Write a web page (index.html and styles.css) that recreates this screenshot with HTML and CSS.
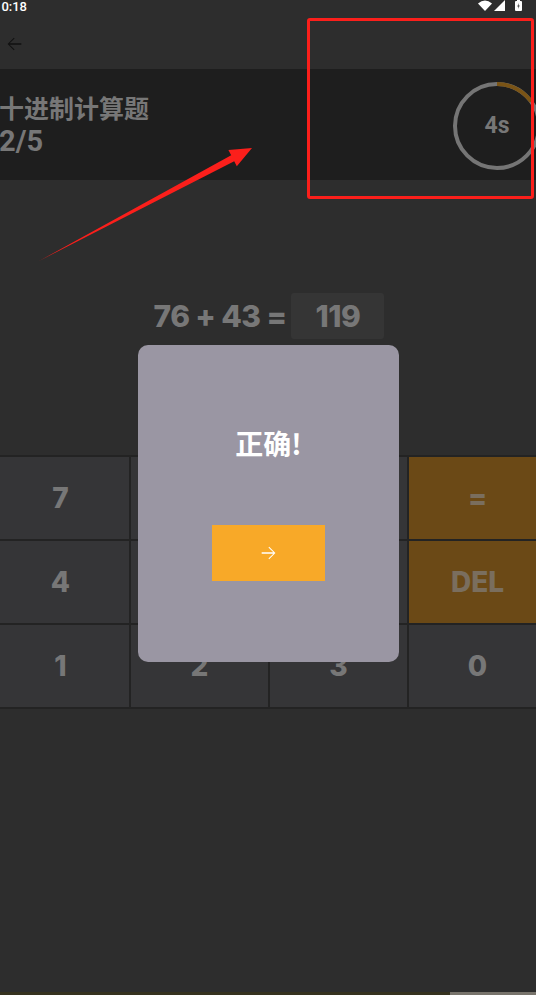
FILE: index.html
```html
<!DOCTYPE html>
<html lang="zh">
<head>
    <meta charset="UTF-8">
    <meta name="viewport" content="width=device-width, initial-scale=1.0">
    <title>十进制计算题</title>
    <link rel="stylesheet" href="styles.css">
</head>
<body>
    <div class="screen">
        <!-- Status bar -->
        <div class="status-bar">
            <span class="clock">10:18</span>
            <div class="status-icons">
                <svg class="wifi" viewBox="0 0 14 11" width="14" height="11"><path d="M0 3.5 Q7 -2.5 14 3.5 L7 11 Z" fill="#fff"/></svg>
                <svg class="signal" viewBox="0 0 11 11" width="11" height="11"><path d="M11 0 V11 H0 Z" fill="#fff"/></svg>
                <svg class="battery" viewBox="0 0 7 11" width="7" height="11"><rect x="0" y="1" width="7" height="10" rx="1" fill="#fff"/><rect x="2" y="0" width="3" height="1" fill="#fff"/><path d="M3.8 3 L2.3 6.4 H3.5 L3.1 9 L4.7 5.5 H3.5 Z" fill="#2d2d2d"/></svg>
            </div>
        </div>

        <!-- Toolbar -->
        <div class="toolbar">
            <svg class="back" viewBox="0 0 24 24" width="22" height="22"><path d="M20 11.25H7.3l5.3-5.3L11.8 5.1 5 12l6.8 6.9.8-.85-5.3-5.3H20v-1.5z" fill="#111"/></svg>
        </div>

        <!-- Quiz header -->
        <div class="quiz-header">
            <div class="quiz-info">
                <div class="quiz-title">十进制计算题</div>
                <div class="quiz-count">2/5</div>
            </div>
            <div class="countdown">
                <svg viewBox="0 0 92 92" width="92" height="92">
                    <circle cx="46" cy="46" r="42" fill="none" stroke="#757575" stroke-width="4"/>
                    <circle cx="46" cy="46" r="42" fill="none" stroke="#7a5416" stroke-width="4"
                        stroke-dasharray="40 300" transform="rotate(-90 46 46)"/>
                </svg>
                <span class="countdown-text">4s</span>
            </div>
        </div>

        <!-- Question -->
        <div class="question">
            <span class="expr">76 + 43 =</span>
            <span class="answer">119</span>
        </div>

        <!-- Keypad -->
        <div class="keypad">
            <div class="key">7</div>
            <div class="key">8</div>
            <div class="key">9</div>
            <div class="key key-op">=</div>
            <div class="key">4</div>
            <div class="key">5</div>
            <div class="key">6</div>
            <div class="key key-op">DEL</div>
            <div class="key">1</div>
            <div class="key">2</div>
            <div class="key">3</div>
            <div class="key">0</div>
        </div>

        <!-- Result dialog -->
        <div class="dialog">
            <div class="dialog-title">正确!</div>
            <button class="next-btn">
                <svg viewBox="0 0 24 24" width="22" height="22"><path d="M12.2 5.1l-.8.85 5.3 5.3H4v1.5h12.7l-5.3 5.3.8.85L19 12z" fill="#fff"/></svg>
            </button>
        </div>

        <!-- Annotation -->
        <div class="mark-box"></div>
        <svg class="mark-arrow" viewBox="0 0 554 300" width="554" height="300">
            <polygon points="47,261 239.2,155.2 236.4,149.9 260,148 244.8,166.2 242.2,161.2" fill="#fb1f1b"/>
        </svg>

        <div class="nav-bar"><div class="nav-thumb"></div></div>
    </div>
</body>
</html>
```

FILE: styles.css
```css
/* General reset */
* {
    margin: 0;
    padding: 0;
    box-sizing: border-box;
}

body {
    background-color: #2d2d2d;
    overflow: hidden;
    font-family: Roboto, "Noto Sans CJK SC", sans-serif;
}

/* The phone screen is a little wider than the shot, so shift it left */
.screen {
    position: relative;
    width: 554px;
    height: 995px;
    margin-left: -8px;
    background-color: #2d2d2d;
    display: flex;
    flex-direction: column;
}

/* Status bar */
.status-bar {
    height: 18px;
    display: flex;
    justify-content: space-between;
    align-items: flex-start;
    padding: 0 24px 0 2px;
    color: #fff;
}

.clock {
    font-size: 13px;
    font-weight: 500;
    line-height: 13px;
}

.status-icons {
    display: flex;
    gap: 2px;
}

.battery {
    margin-left: 8px;
}

/* Toolbar */
.toolbar {
    height: 51px;
    display: flex;
    align-items: center;
    padding-left: 11px;
}

/* Quiz header */
.quiz-header {
    height: 111px;
    background-color: #1e1e1e;
    display: flex;
    justify-content: space-between;
    align-items: center;
    padding: 0 3px 0 7px;
    color: #777;
}

.quiz-title {
    font-family: "Noto Sans CJK SC", sans-serif;
    font-weight: bold;
    font-size: 25px;
    line-height: 33px;
}

.quiz-count {
    font-weight: bold;
    font-size: 29px;
    line-height: 34px;
}

.countdown {
    position: relative;
    width: 92px;
    height: 92px;
    margin-top: 2px;
}

.countdown svg {
    display: block;
}

.countdown-text {
    position: absolute;
    inset: 0;
    display: flex;
    justify-content: center;
    align-items: center;
    font-weight: bold;
    font-size: 23px;
    color: #777;
}

/* Question */
.question {
    margin-top: 113px;
    height: 46px;
    display: flex;
    justify-content: center;
    align-items: center;
    gap: 5px;
    font-family: Inter, sans-serif;
    font-weight: 800;
    color: #777;
}

.expr {
    font-size: 30px;
    letter-spacing: -0.6px;
}

.answer {
    width: 93px;
    height: 46px;
    background-color: #353535;
    border-radius: 3px;
    display: flex;
    justify-content: center;
    align-items: center;
    font-size: 30px;
    letter-spacing: -0.6px;
}

/* Keypad */
.keypad {
    margin-top: 116px;
    display: grid;
    grid-template-columns: repeat(4, 1fr);
    grid-template-rows: repeat(3, 82px);
    gap: 2px;
    padding: 2px 0;
    background-color: #232323;
}

.key {
    background-color: #353537;
    display: flex;
    justify-content: center;
    align-items: center;
    font-family: Inter, sans-serif;
    font-weight: 800;
    font-size: 28px;
    color: #777;
}

.key-op {
    background-color: #6b4916;
    color: #7a6e5e;
}

/* Result dialog */
.dialog {
    position: absolute;
    left: 146px;
    top: 345px;
    width: 261px;
    height: 317px;
    background-color: #9a96a3;
    border-radius: 10px;
    display: flex;
    flex-direction: column;
    align-items: center;
}

.dialog-title {
    margin-top: 81px;
    font-family: "Noto Sans CJK SC", sans-serif;
    font-weight: bold;
    font-size: 28px;
    line-height: 34px;
    color: #fff;
}

.next-btn {
    margin-top: 65px;
    width: 113px;
    height: 56px;
    border: none;
    background-color: #f8a928;
    display: flex;
    justify-content: center;
    align-items: center;
}

/* Red annotation */
.mark-box {
    position: absolute;
    left: 315px;
    top: 18px;
    width: 227px;
    height: 181px;
    border: 3px solid #fb1f1b;
    border-radius: 3px;
}

.mark-arrow {
    position: absolute;
    left: 0;
    top: 0;
}

/* Bottom bar */
.nav-bar {
    position: absolute;
    left: 0;
    right: 0;
    bottom: 0;
    height: 3px;
    background-color: #36321f;
}

.nav-thumb {
    margin-left: 458px;
    height: 3px;
    background-color: #78746c;
}
```
